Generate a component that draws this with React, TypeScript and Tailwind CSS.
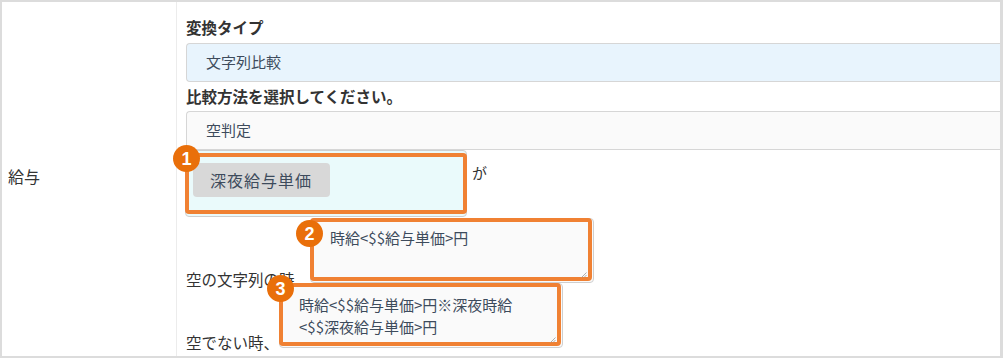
import React from "react";

const FONT = { fontFamily: '"Noto Sans CJK JP", "Noto Sans", sans-serif' };

function Badge({ n, className }: { n: string; className: string }) {
  return (
    <div
      className={
        "absolute w-[27px] h-[27px] rounded-full bg-[#e96f0a] text-white flex items-center justify-center text-[18px] font-bold leading-none z-20 " +
        className
      }
      style={{ fontFamily: '"Liberation Sans", Arial, sans-serif' }}
    >
      {n}
    </div>
  );
}

function Grip() {
  return (
    <svg className="absolute right-[7px] bottom-[5px] z-30" width="6" height="6" viewBox="0 0 6 6">
      <line x1="0.5" y1="5.5" x2="5.5" y2="0.5" stroke="#9a9a9a" strokeWidth="0.8" />
      <line x1="3" y1="5.5" x2="5.5" y2="3" stroke="#9a9a9a" strokeWidth="0.8" />
    </svg>
  );
}

function TextBox({ lines, badge, badgeClass, textTop }: { lines: string[]; badge: string; badgeClass: string; textTop: string }) {
  return (
    <div className="relative w-[284px] h-[65px] shrink-0">
      <div className={"absolute inset-0 rounded-[4px] border border-[#cfcfcf] bg-[#fafafa] pl-[19px] text-[15px] leading-[22px] text-[#3d4b5c] " + textTop}>
        {lines.map((l, i) => (
          <div key={i} className="whitespace-nowrap">{l}</div>
        ))}
      </div>
      <div className="absolute left-0 top-0 right-[2px] bottom-[2px] rounded-[4px] border-4 border-[#f08133] z-10" />
      <Grip />
      <Badge n={badge} className={badgeClass} />
    </div>
  );
}

export default function App() {
  return (
    <div className="w-[1003px] h-[360px] bg-white" style={FONT}>
      <div className="w-[1003px] h-[358px] border-2 border-r-[3px] border-[#dcdcdc] flex overflow-hidden">
        <div className="w-[175px] shrink-0 border-r border-[#ececec] flex items-center pl-[6px]">
          <span className="text-[16px] text-[#333] relative -top-[3px]">給与</span>
        </div>
        <div className="flex-1 pl-[9px] pt-[14px]">
          <div className="text-[15.5px] font-bold leading-[22px] text-[#333]">変換タイプ</div>
          <div className="mt-[5px] h-[39px] rounded-l-[4px] border border-r-0 border-[#d6d6d6] bg-[#e8f4fd] flex items-center pl-[19px] text-[15px] text-[#3d4b5c]">
            文字列比較
          </div>
          <div className="mt-[3px] text-[15.5px] font-bold leading-[22px] text-[#333]">比較方法を選択してください。</div>
          <div className="mt-[4px] h-[39px] rounded-l-[4px] border border-r-0 border-[#d6d6d6] bg-[#fafafa] flex items-center pl-[19px] text-[15px] text-[#3d4b5c]">
            空判定
          </div>
          <div className="flex items-start">
            <div className="relative w-[282px] h-[67px] -ml-[1px] rounded-[4px] border border-[#cfcfcf] bg-[#eafafb] pl-[7px] pt-[12px] shrink-0">
              <div className="w-[137px] h-[34px] rounded-[4px] bg-[#d8d8d8] flex items-center pl-[17px] text-[16px] tracking-[1px] text-[#3d4b5c]">
                深夜給与単価
              </div>
              <div className="absolute -left-[1px] top-[2px] w-[282px] h-[61px] rounded-[4px] border-4 border-[#f08133] z-10" />
              <Badge n="1" className="-left-[13px] -top-[6px]" />
            </div>
            <span className="ml-[5px] mt-[12px] text-[15px] leading-[22px] text-[#333]">が</span>
          </div>
          <div className="mt-[1px] flex items-end">
            <span className="text-[15.5px] leading-none text-[#333] -mb-[4px] whitespace-nowrap">空の文字列の時、</span>
            <TextBox lines={["時給<$$給与単価>円"]} badge="2" badgeClass="-left-[14px] top-[2px]" textTop="pt-[8px]" />
          </div>
          <div className="flex items-end">
            <span className="text-[15.5px] leading-none text-[#333] -mb-[2px] whitespace-nowrap">空でない時、</span>
            <TextBox
              lines={["時給<$$給与単価>円※深夜時給", "<$$深夜給与単価>円"]}
              badge="3"
              badgeClass="-left-[12px] -top-[8px]"
              textTop="pt-[10px]"
            />
          </div>
        </div>
      </div>
    </div>
  );
}
